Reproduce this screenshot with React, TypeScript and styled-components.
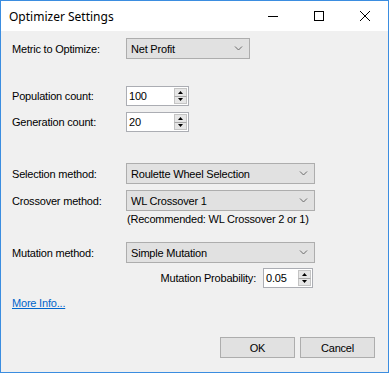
import React from "react";
import styled, { createGlobalStyle } from "styled-components";

const Global = createGlobalStyle`
  html, body { margin: 0; padding: 0; background: #ffffff; }
  * { box-sizing: border-box; }
`;

const Window = styled.div`
  width: 389px;
  height: 373px;
  border: 1px solid #3b8de0;
  background: #f0f0f0;
  display: flex;
  flex-direction: column;
  font-family: "Liberation Sans", Arial, sans-serif;
  font-size: 11px;
  letter-spacing: -0.2px;
  color: #000;
`;

const TitleBar = styled.div`
  height: 30px;
  background: #ffffff;
  display: flex;
  align-items: center;
  flex-shrink: 0;
`;

const Title = styled.div`
  flex: 1;
  padding-left: 8px;
  font-family: "Noto Sans", "Open Sans", sans-serif;
  font-size: 12px;
  letter-spacing: 0;
  color: #000;
`;

const CaptionButton = styled.div`
  width: 46px;
  height: 30px;
  display: flex;
  align-items: center;
  justify-content: center;
`;

const Body = styled.div`
  flex: 1;
  display: flex;
  flex-direction: column;
  padding: 7px 11px 0 11px;
`;

const Row = styled.div<{ $mt?: number }>`
  display: flex;
  align-items: center;
  margin-top: ${(p) => p.$mt ?? 0}px;
`;

const Label = styled.div`
  width: 114px;
  flex-shrink: 0;
`;

const Combo = styled.div<{ $w: number }>`
  width: ${(p) => p.$w}px;
  height: 21px;
  background: #e1e1e1;
  border: 1px solid #adadad;
  display: flex;
  align-items: center;
  padding-left: 4px;
  padding-right: 6px;
`;

const ComboText = styled.div`
  flex: 1;
`;

const Spinner = styled.div<{ $w: number }>`
  width: ${(p) => p.$w}px;
  height: 20px;
  background: #ffffff;
  border: 1px solid #abadb3;
  display: flex;
  align-items: stretch;
`;

const SpinText = styled.div`
  flex: 1;
  display: flex;
  align-items: center;
  padding-left: 2px;
`;

const SpinButtons = styled.div`
  width: 14px;
  display: flex;
  flex-direction: column;
  padding: 1px 1px 1px 0;
`;

const SpinHalf = styled.div<{ $top?: boolean }>`
  flex: 1;
  background: #e6e6e6;
  border: 1px solid #c4c4c4;
  ${(p) => (p.$top ? "border-bottom-color: #a8a8a8;" : "border-top: none;")}
  display: flex;
  align-items: center;
  justify-content: center;
`;

const Note = styled.div`
  margin-left: 115px;
  margin-top: 2px;
  line-height: 13px;
`;

const ProbRow = styled.div`
  display: flex;
  align-items: center;
  justify-content: flex-end;
  gap: 7px;
  width: 301px;
  margin-top: 5px;
`;

const Link = styled.a`
  color: #0066cc;
  text-decoration: underline;
  margin-top: 9px;
  align-self: flex-start;
  cursor: pointer;
`;

const Footer = styled.div`
  display: flex;
  justify-content: flex-end;
  gap: 5px;
  margin-top: auto;
  padding: 0 2px 14px 0;
`;

const Button = styled.div`
  width: 75px;
  height: 21px;
  background: #e1e1e1;
  border: 1px solid #adadad;
  display: flex;
  align-items: center;
  justify-content: center;
`;

const Chevron = () => (
  <svg width="9" height="5" viewBox="0 0 9 5">
    <path d="M1 0.5 L4.5 4 L8 0.5" fill="none" stroke="#6a6a6a" strokeWidth="1" />
  </svg>
);

const Up = () => (
  <svg width="5" height="3" viewBox="0 0 5 3">
    <path d="M2.5 0 L5 3 L0 3 Z" fill="#000" />
  </svg>
);
const Down = () => (
  <svg width="5" height="3" viewBox="0 0 5 3">
    <path d="M0 0 L5 0 L2.5 3 Z" fill="#000" />
  </svg>
);

const SpinBox = ({ value, w }: { value: string; w: number }) => (
  <Spinner $w={w}>
    <SpinText>{value}</SpinText>
    <SpinButtons>
      <SpinHalf $top>
        <Up />
      </SpinHalf>
      <SpinHalf>
        <Down />
      </SpinHalf>
    </SpinButtons>
  </Spinner>
);

const Select = ({ value, w }: { value: string; w: number }) => (
  <Combo $w={w}>
    <ComboText>{value}</ComboText>
    <Chevron />
  </Combo>
);

export default function App() {
  return (
    <>
      <Global />
      <Window>
        <TitleBar>
          <Title>Optimizer Settings</Title>
          <CaptionButton>
            <svg width="10" height="1" viewBox="0 0 10 1">
              <rect x="0" y="0" width="10" height="1" fill="#000" />
            </svg>
          </CaptionButton>
          <CaptionButton>
            <svg width="10" height="10" viewBox="0 0 10 10">
              <rect x="0.5" y="0.5" width="9" height="9" fill="none" stroke="#000" />
            </svg>
          </CaptionButton>
          <CaptionButton>
            <svg width="10" height="10" viewBox="0 0 10 10">
              <path d="M0 0 L10 10 M10 0 L0 10" stroke="#000" strokeWidth="1" />
            </svg>
          </CaptionButton>
        </TitleBar>
        <Body>
          <Row>
            <Label>Metric to Optimize:</Label>
            <Select value="Net Profit" w={124} />
          </Row>
          <Row $mt={27}>
            <Label>Population count:</Label>
            <SpinBox value="100" w={63} />
          </Row>
          <Row $mt={6}>
            <Label>Generation count:</Label>
            <SpinBox value="20" w={63} />
          </Row>
          <Row $mt={31}>
            <Label>Selection method:</Label>
            <Select value="Roulette Wheel Selection" w={189} />
          </Row>
          <Row $mt={6}>
            <Label>Crossover method:</Label>
            <Select value="WL Crossover 1" w={189} />
          </Row>
          <Note>(Recommended: WL Crossover 2 or 1)</Note>
          <Row $mt={16}>
            <Label>Mutation method:</Label>
            <Select value="Simple Mutation" w={189} />
          </Row>
          <ProbRow>
            <span>Mutation Probability:</span>
            <SpinBox value="0.05" w={50} />
          </ProbRow>
          <Link>More Info...</Link>
          <Footer>
            <Button>OK</Button>
            <Button>Cancel</Button>
          </Footer>
        </Body>
      </Window>
    </>
  );
}
